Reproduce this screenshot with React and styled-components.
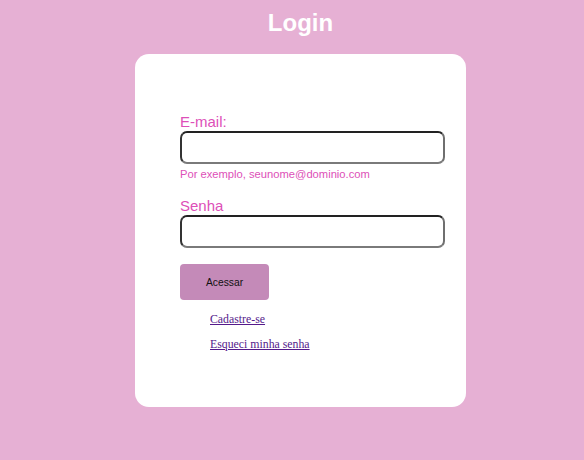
import React from 'react';
import styled, { createGlobalStyle } from 'styled-components';

const GlobalStyle = createGlobalStyle`
  html, body {
    margin: 0;
    padding: 0;
    background-color: #e6b0d4;
  }
`;

const Page = styled.div`
  width: 584px;
  height: 460px;
  box-sizing: border-box;
  padding-left: 17px;
  display: flex;
  flex-direction: column;
  align-items: center;
  font-family: 'Liberation Sans', Arial, sans-serif;
`;

const Title = styled.h1`
  margin: 8px 0 0;
  font-size: 24px;
  line-height: 30px;
  font-weight: 700;
  color: #fff;
`;

const Card = styled.form`
  margin-top: 16px;
  width: 331px;
  height: 353px;
  box-sizing: border-box;
  padding: 59px 21px 0 45px;
  background-color: #fff;
  border-radius: 14px;
  display: flex;
  flex-direction: column;
`;

const Label = styled.label`
  font-size: 15px;
  line-height: 18px;
  color: #dd50b8;
`;

const Input = styled.input`
  width: 265px;
  height: 33px;
  box-sizing: border-box;
  border-style: solid;
  border-width: 2px;
  border-color: #222 #6f6f6f #7a7a7a #333;
  border-radius: 7px;
  background: #fff;
  outline: none;
`;

const Hint = styled.span`
  font-size: 11.2px;
  line-height: 14px;
  margin-top: 3px;
  color: #dd50b8;
`;

const Field = styled.div`
  display: flex;
  flex-direction: column;
  margin-bottom: ${props => props.$gap || 0}px;
`;

const Button = styled.button`
  width: 89px;
  height: 36px;
  border: none;
  border-radius: 4px;
  background-color: #c48ab8;
  font-family: 'Liberation Sans', Arial, sans-serif;
  font-size: 10.3px;
  color: #111;
  cursor: pointer;
`;

const LinkList = styled.div`
  display: flex;
  flex-direction: column;
  gap: 10px;
  margin-top: 12px;
  padding-left: 30px;
`;

const TextLink = styled.a`
  font-family: 'Liberation Serif', 'Times New Roman', serif;
  font-size: 11.8px;
  line-height: 15px;
  color: #551a8b;
  text-decoration: underline;
  align-self: flex-start;
`;

const App = () => (
  <>
    <GlobalStyle />
    <Page>
      <Title>Login</Title>
      <Card onSubmit={e => e.preventDefault()}>
        <Field $gap={16}>
          <Label htmlFor="email">E-mail:</Label>
          <Input id="email" type="email" />
          <Hint>Por exemplo, seunome@dominio.com</Hint>
        </Field>
        <Field $gap={16}>
          <Label htmlFor="senha">Senha</Label>
          <Input id="senha" type="password" />
        </Field>
        <Button type="submit">Acessar</Button>
        <LinkList>
          <TextLink href="#">Cadastre-se</TextLink>
          <TextLink href="#">Esqueci minha senha</TextLink>
        </LinkList>
      </Card>
    </Page>
  </>
);

export default App;
